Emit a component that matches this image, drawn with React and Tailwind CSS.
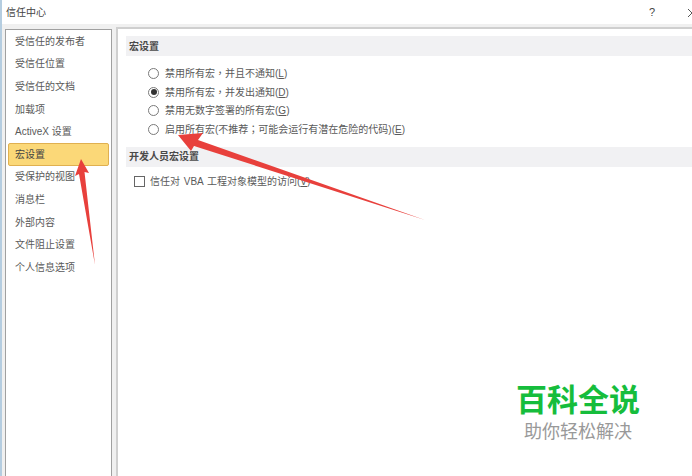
const FONT = "font-['Liberation_Sans','Noto_Sans_CJK_SC',sans-serif]";

const navItems = ['受信任的发布者', '受信任位置', '受信任的文档', '加载项', 'ActiveX 设置', '宏设置', '受保护的视图', '消息栏', '外部内容', '文件阻止设置', '个人信息选项'];

// full-width punctuation sits centred in the reference
function Punct({ children }) {
  return <span className="font-['Noto_Sans_CJK_TC',sans-serif]">{children}</span>;
}

function Radio({ checked, children, hotkey, suffix = '' }) {
  return (
    <div className="flex items-center h-[18.7px]">
      <span className="w-[11px] h-[11px] rounded-full border border-[#7a7a7a] bg-white flex items-center justify-center">
        {checked && <span className="w-[6px] h-[6px] rounded-full bg-[#333]" />}
      </span>
      <span className="ml-[6px]">
        {children}(<span className="underline">{hotkey}</span>){suffix}
      </span>
    </div>
  );
}

function SectionHeader({ children }) {
  return (
    <div className="h-[20px] pl-[3px] flex items-center bg-[#f1f1f3] font-bold text-[#4a4a4a]">{children}</div>
  );
}

export default function App() {
  return (
    <div className={`relative w-[692px] h-[476px] overflow-hidden flex flex-col bg-[#f0f0f0] text-[10px] text-[#5a5a5a] border-l-2 border-[#b5cde0] ${FONT}`}>
      {/* title bar */}
      <div className="h-[24px] shrink-0 bg-white flex items-center pl-[4px] text-[#444]">
        <span className="flex-1">信任中心</span>
        <span className="mr-[33px] text-[11px]">?</span>
        <svg className="shrink-0 mt-[1px]" width="4" height="10" viewBox="0 0 4 10">
          <path d="M0 1 L4 5 L0 9" fill="none" stroke="#555" strokeWidth="1" />
        </svg>
      </div>

      <div className="flex flex-1 min-h-0 pt-[5px] pl-[3px] gap-[4px]">
        {/* left nav */}
        <div className="w-[107px] shrink-0 bg-white border border-b-0 border-[#a0a0a0] px-[2px]">
          {navItems.map((item) => (
            <div
              key={item}
              className={item === '宏设置'
                ? 'h-[22.6px] flex items-center pl-[6px] rounded-[2px] border border-[#e0b050] bg-[#fbd878] text-[#444]'
                : 'h-[22.6px] flex items-center pl-[7px]'}
            >
              {item}
            </div>
          ))}
        </div>

        {/* right panel */}
        <div className="flex-1 bg-white border-l-2 border-t-2 border-[#cfcfcf] pt-[7px] pl-[8px] mt-[-2px]">
          <SectionHeader>宏设置</SectionHeader>
          <div className="pl-[22px] pt-[8px] pb-[8px]">
            <Radio hotkey="L">禁用所有宏<Punct>，</Punct>并且不通知</Radio>
            <Radio checked hotkey="D">禁用所有宏<Punct>，</Punct>并发出通知</Radio>
            <Radio hotkey="G">禁用无数字签署的所有宏</Radio>
            <Radio hotkey="E">启用所有宏(不推荐<Punct>；</Punct>可能会运行有潜在危险的代码)</Radio>
          </div>
          <SectionHeader>开发人员宏设置</SectionHeader>
          <div className="flex items-center pl-[8px] pt-[4px] h-[26px]">
            <span className="w-[11px] h-[11px] border border-[#666] bg-white" />
            <span className="ml-[5px] [word-spacing:1px]">信任对 VBA 工程对象模型的访问(<span className="underline">V</span>)</span>
          </div>
        </div>
      </div>

      {/* red annotation arrows */}
      <svg className="absolute left-[-2px] top-0 pointer-events-none" width="692" height="476" viewBox="0 0 692 476">
        <path d="M81 159 L89 173 L84.5 172 L95 265 L79 174 L75 176 Z" fill="#e8403c" />
        <path d="M178 135 L203 133 L198 140 L425 220 L194 146 L191 151 Z" fill="#e8403c" />
      </svg>

      {/* watermark */}
      <div className="absolute left-[501px] top-[378px] w-[150px] h-[70px] bg-white flex flex-col items-center">
        <div className="text-[31px] leading-[46px] font-bold text-[#16bd3c]">百科全说</div>
        <div className="text-[18px] leading-[24px] text-[#999] mt-[-4px]">助你轻松解决</div>
      </div>
    </div>
  );
}
